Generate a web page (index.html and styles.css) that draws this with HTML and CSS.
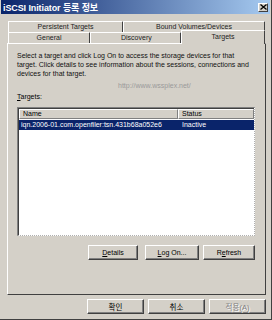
FILE: index.html
```html
<!DOCTYPE html>
<html>
<head>
<meta charset="utf-8">
<link rel="stylesheet" href="styles.css">
</head>
<body>
<div class="window">
  <div class="titlebar">
    <span class="title">iSCSI Initiator 등록 정보</span>
    <span class="close"><svg width="7" height="6" viewBox="0 0 7 6"><path d="M0.5 0.5 L6.5 5.5 M6.5 0.5 L0.5 5.5" stroke="#000" stroke-width="1.3" fill="none"/></svg></span>
  </div>
  <div class="content">
    <div class="tabs">
      <div class="tabrow back">
        <div class="tab t-pers">Persistent Targets</div>
        <div class="tab t-bound">Bound Volumes/Devices</div>
      </div>
      <div class="tabrow front">
        <div class="tab t-gen">General</div>
        <div class="tab t-disc">Discovery</div>
        <div class="tab t-targ sel">Targets</div>
      </div>
    </div>
    <div class="panel">
      <p class="desc">Select a target and click Log On to access the storage devices for that target. Click details to see information about the sessions, connections and devices for that target.</p>
      <div class="watermark">http://www.wssplex.net/</div>
      <div class="label"><u>T</u>argets:</div>
      <div class="list">
        <div class="hdr">
          <div class="hc c-name">Name</div>
          <div class="hc c-status">Status</div>
        </div>
        <div class="row selected">
          <div class="cell c-name">iqn.2006-01.com.openfiler:tsn.431b68a052e6</div>
          <div class="cell c-status">Inactive</div>
        </div>
      </div>
      <div class="pbtns">
        <div class="btn b-det"><u>D</u>etails</div>
        <div class="btn b-log"><u>L</u>og On...</div>
        <div class="btn b-ref">R<u>e</u>fresh</div>
      </div>
    </div>
    <div class="dbtns">
      <div class="btn dbtn">확인</div>
      <div class="btn dbtn">취소</div>
      <div class="btn dbtn disabled">적용(A)</div>
    </div>
  </div>
</div>
</body>
</html>
```

FILE: styles.css
```css
* { box-sizing: border-box; }
html, body { margin: 0; padding: 0; }
body {
  width: 272px;
  height: 320px;
  overflow: hidden;
  background: #d4d0c8;
  font-family: "Liberation Sans", Arial, "Noto Sans CJK KR", sans-serif;
  font-size: 7px;
  color: #000;
}
.window {
  width: 272px;
  height: 320px;
  padding: 0 1px 0 1px;
  border-right: 1px solid #404040;
  border-bottom: 1px solid #404040;
  display: flex;
  flex-direction: column;
}
.titlebar {
  height: 14px;
  flex: none;
  background: linear-gradient(to right, #0a246a, #a6caf0);
  display: flex;
  align-items: center;
  justify-content: space-between;
  padding: 0 2px 0 2px;
}
.title {
  color: #fff;
  font-weight: bold;
  font-size: 9px;
  letter-spacing: -0.1px;
}
.close {
  width: 10px;
  height: 9px;
  background: #d4d0c8;
  border-top: 1px solid #fff;
  border-left: 1px solid #fff;
  border-right: 1px solid #404040;
  border-bottom: 1px solid #404040;
  display: flex;
  align-items: center;
  justify-content: center;
}
.content {
  flex: 1;
  padding: 7px 4px 0 6px;
  display: flex;
  flex-direction: column;
}
.tabs {
  padding-left: 1px;
  padding-right: 1px;
}
.tabrow {
  display: flex;
  height: 11px;
}
.tab {
  border-top: 1px solid #fff;
  border-left: 1px solid #fff;
  border-right: 1px solid #404040;
  border-top-left-radius: 1px;
  border-top-right-radius: 1px;
  text-align: center;
  line-height: 10px;
  font-size: 7px;
  color: #222;
}
.t-pers { width: 115px; }
.t-bound { width: 142px; }
.t-gen { width: 82px; }
.t-disc { width: 91px; text-align: left; padding-left: 30px; }
.t-targ { width: 84px; }
.tab.sel {
  height: 14px;
  margin-top: -2px;
  background: #d4d0c8;
  position: relative;
  z-index: 2;
  line-height: 12px;
}
.panel {
  height: 252px;
  border-top: 1px solid #fff;
  border-left: 1px solid #fff;
  border-right: 1px solid #404040;
  border-bottom: 1px solid #404040;
  padding: 7px 10px 0 9px;
  display: flex;
  flex-direction: column;
}
.desc {
  margin: 0;
  line-height: 9px;
  font-size: 7px;
  color: #111;
}
.watermark {
  margin-top: 3px;
  line-height: 9px;
  padding-left: 101px;
  color: #9a9a9a;
  font-size: 7px;
}
.label {
  margin-top: 2px;
  line-height: 9px;
  font-size: 7px;
}
.list {
  margin-top: 6px;
  height: 129px;
  background: #fff;
  border-top: 1px solid #808080;
  border-left: 1px solid #808080;
  border-right: 1px dotted #b0b0b0;
  border-bottom: 1px dotted #b0b0b0;
  box-shadow: inset 1px 1px 0 #404040;
  padding: 1px 0 0 1px;
}
.hdr {
  display: flex;
  height: 10px;
}
.hc {
  background: #d4d0c8;
  border-top: 1px solid #fff;
  border-left: 1px solid #fff;
  border-right: 1px solid #808080;
  border-bottom: 1px solid #808080;
  line-height: 8px;
  padding-left: 3px;
  font-size: 7px;
}
.c-name { width: 159px; }
.c-status { flex: 1; }
.row {
  display: flex;
  height: 10px;
  margin-top: 1px;
}
.row.selected {
  background: #0a246a;
  color: #fff;
}
.cell {
  line-height: 10px;
  padding-left: 2px;
  font-size: 7px;
  white-space: nowrap;
  overflow: hidden;
}
.cell.c-status { padding-left: 4px; }
.btn {
  height: 15px;
  background: #d4d0c8;
  border-top: 1px solid #fff;
  border-left: 1px solid #fff;
  border-right: 1px solid #404040;
  border-bottom: 1px solid #404040;
  box-shadow: inset -1px -1px 0 #808080;
  display: flex;
  align-items: center;
  justify-content: center;
  font-size: 7px;
}
.pbtns {
  margin-top: 9px;
  display: flex;
  justify-content: flex-end;
}
.b-det { width: 50px; margin-right: 7px; }
.b-log { width: 54px; margin-right: 4px; }
.b-ref { width: 52px; }
.dbtns {
  margin-top: 4px;
  display: flex;
  justify-content: flex-end;
  padding-right: 0;
}
.dbtn { width: 57px; margin-left: 4px; font-size: 7.5px; }
.dbtn:first-child { margin-left: 0; }
.dbtn.disabled {
  color: #808080;
  text-shadow: 1px 1px 0 #fff;
}
```
